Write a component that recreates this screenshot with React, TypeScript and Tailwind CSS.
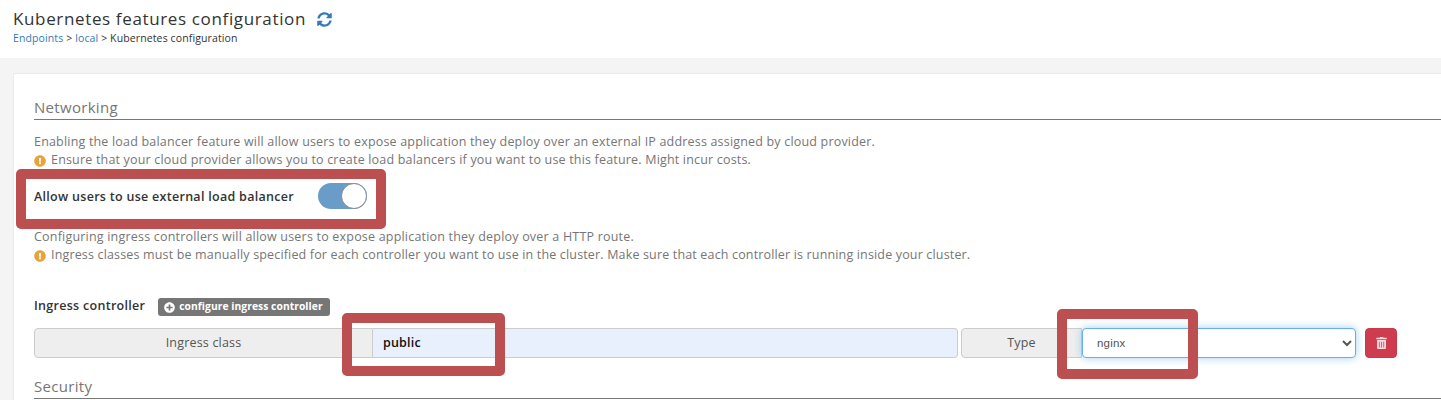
import { FaSyncAlt, FaExclamationCircle, FaPlusCircle, FaTrashAlt } from "react-icons/fa";

function Note({ children, className = "" }: { children: string; className?: string }) {
  return (
    <div className={`flex h-[19px] items-center ${className}`}>
      <FaExclamationCircle className="mr-[5px] h-[12px] w-[12px] text-[#e8a33d]" />
      <span>{children}</span>
    </div>
  );
}

function Section({ children }: { children: string }) {
  return (
    <div className="h-[24px] border-b border-[#777777] text-[15px] leading-[22px] tracking-[0.3px] text-[#767676]">
      {children}
    </div>
  );
}

function Mark({ className }: { className: string }) {
  return <div className={`absolute rounded-[5px] border-[10px] border-[#bc5050] ${className}`} />;
}

export default function App() {
  return (
    <div className="relative h-[400px] w-[1441px] overflow-hidden bg-[#f4f4f4] font-['Open_Sans',sans-serif] text-[#333333]">
      <header className="h-[58px] bg-white pl-[13px] pt-[8px]">
        <div className="flex h-[22px] items-center">
          <h1 className="text-[17px] leading-[22px] tracking-[0.64px] text-[#333333]">Kubernetes features configuration</h1>
          <FaSyncAlt className="ml-[11px] h-[15px] w-[15px] text-[#337ab7]" />
        </div>
        <div className="mt-[1px] text-[10.5px] leading-[14px] tracking-[0.12px]">
          <span className="text-[#337ab7]">Endpoints</span> &gt; <span className="text-[#337ab7]">local</span> &gt; Kubernetes configuration
        </div>
      </header>

      <main className="ml-[13px] mt-[15px] h-[400px] w-[1440px] rounded-t-[2px] border border-[#eaeaea] bg-white pl-[20px] pt-[22px] text-[12.5px] tracking-[0.185px] text-[#767676]">
        <Section>Networking</Section>
        <div className="mt-[12px] h-[19px] leading-[19px]">
          Enabling the load balancer feature will allow users to expose application they deploy over an external IP address assigned by cloud provider.
        </div>
        <Note>Ensure that your cloud provider allows you to create load balancers if you want to use this feature. Might incur costs.</Note>

        <div className="mt-[13px] flex h-[26px] items-center">
          <span className="w-[284px] pt-[2px] font-semibold tracking-[0.29px] text-[#333333]">Allow users to use external load balancer</span>
          <div className="flex h-[26px] w-[49px] justify-end rounded-full bg-[#6a9cc8]">
            <div className="h-[26px] w-[26px] rounded-full border border-[#8a8a8a] bg-white" />
          </div>
        </div>

        <div className="mt-[18px] h-[19px] leading-[19px] tracking-[0.2px]">
          Configuring ingress controllers will allow users to expose application they deploy over a HTTP route.
        </div>
        <Note className="tracking-[0.16px]">Ingress classes must be manually specified for each controller you want to use in the cluster. Make sure that each controller is running inside your cluster.</Note>

        <div className="mt-[32px] flex h-[19px] items-end">
          <span className="self-start leading-[17px] font-semibold tracking-[0.29px] text-[#333333]">Ingress controller</span>
          <span className="ml-[13px] flex h-[18px] w-[172px] items-center rounded-[3px] bg-[#767676] pl-[6px] text-[10.3px] font-bold tracking-[0.05px] text-white">
            <FaPlusCircle className="mr-[4px] h-[11px] w-[11px]" />
            configure ingress controller
          </span>
        </div>

        <div className="mt-[12px] flex h-[30px] items-stretch">
          <div className="flex w-[339px] items-center justify-center rounded-l-[4px] border border-[#cccccc] bg-[#eeeeee] text-[#555555]">Ingress class</div>
          <div className="flex w-[585px] items-center rounded-r-[4px] border border-l-0 border-[#cccccc] bg-[#e8f0fe] pl-[10px] font-semibold text-[#111111]">public</div>
          <div className="ml-[3px] flex w-[121px] items-center justify-center rounded-l-[4px] border border-[#cccccc] bg-[#eeeeee] text-[#555555]">Type</div>
          <select defaultValue="nginx" className="h-[30px] w-[274px] rounded-[4px] border border-[#66afe9] bg-white pl-[10px] font-['Liberation_Sans',sans-serif] text-[11.5px] text-[#555555] shadow-[0_0_8px_rgba(102,175,233,0.6)] outline-none">
            <option value="nginx">nginx</option>
          </select>
          <button className="ml-[9px] flex w-[32px] items-center justify-center rounded-[4px] border border-[#c9394c] bg-[#cf3c4f] text-white/80">
            <FaTrashAlt className="h-[12px] w-[11px]" />
          </button>
        </div>

        <div className="mt-[17px]">
          <Section>Security</Section>
        </div>
      </main>

      <Mark className="left-[16px] top-[169px] h-[60px] w-[370px]" />
      <Mark className="left-[342px] top-[313px] h-[63px] w-[163px]" />
      <Mark className="left-[1057px] top-[309px] h-[70px] w-[141px]" />
    </div>
  );
}
